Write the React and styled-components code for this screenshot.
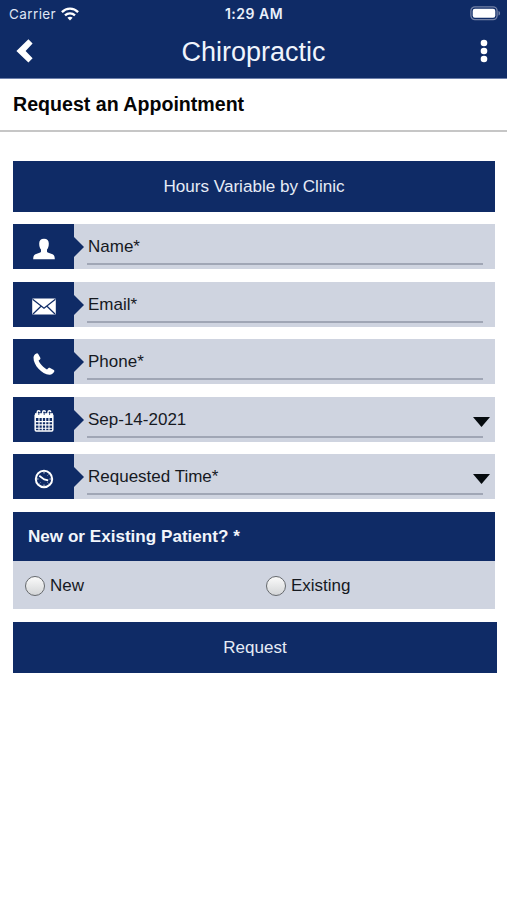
import React from 'react'
import styled, { createGlobalStyle } from 'styled-components'

const App = () => {
    return (
        <Container>
            <GlobalStyle />
            <Header>
                <StatusBar>
                    <Carrier>
                        Carrier
                        <WifiIcon />
                    </Carrier>
                    <Clock>1:29 AM</Clock>
                    <Battery>
                        <BatteryIcon />
                    </Battery>
                </StatusBar>
                <NavBar>
                    <NavButton aria-label="Back">
                        <BackIcon />
                    </NavButton>
                    <NavTitle>Chiropractic</NavTitle>
                    <NavButton aria-label="Menu" $right>
                        <MenuIcon />
                    </NavButton>
                </NavBar>
            </Header>
            <PageTitle>Request an Appointment</PageTitle>
            <Form>
                <Banner>Hours Variable by Clinic</Banner>
                {fields.map(({ label, icon, select }) => (
                    <Field key={label}>
                        <IconBox>{icon}</IconBox>
                        <Pointer viewBox="0 0 10 20">
                            <path d="M0 0L10 10L0 20Z" fill="#0f2b66" />
                        </Pointer>
                        <Input>{label}</Input>
                        {select && (
                            <Caret viewBox="0 0 17 10">
                                <path d="M0 0H17L8.5 10Z" fill="#050a0e" />
                            </Caret>
                        )}
                    </Field>
                ))}
                <Group>
                    <Question>New or Existing Patient? *</Question>
                    <Options>
                        <Option>
                            <Radio />
                            New
                        </Option>
                        <Option>
                            <Radio />
                            Existing
                        </Option>
                    </Options>
                </Group>
                <Submit>Request</Submit>
            </Form>
        </Container>
    )
}

export default App

const WifiIcon = () => (
    <svg width="18" height="14" viewBox="0 0 18 14" fill="none" stroke="#fff" strokeWidth="2.3">
        <path d="M0.9 5.1C5.4 0.5 12.6 0.5 17.1 5.1" />
        <path d="M4 8.4C6.9 5.6 11.1 5.6 14 8.4" />
        <path d="M6.4 10.8C7.9 9.4 10.1 9.4 11.6 10.8L9 13.6Z" fill="#fff" stroke="none" />
    </svg>
)

const BatteryIcon = () => (
    <svg width="31" height="15" viewBox="0 0 31 15">
        <rect x="0.9" y="0.9" width="26.2" height="12.7" rx="4" fill="none" stroke="#7482a6" strokeWidth="1.3" />
        <rect x="2.7" y="2.7" width="22.6" height="9.1" rx="2.2" fill="#fff" />
        <path d="M28.5 5C30.6 5.7 30.6 8.9 28.5 9.6Z" fill="#7482a6" />
    </svg>
)

const BackIcon = () => (
    <svg width="17" height="24" viewBox="0 0 17 24">
        <path d="M12.4 0.2L16.6 4.5L9.6 12L16.6 19.3L12.4 23.6L0.4 12Z" fill="#fff" />
    </svg>
)

const MenuIcon = () => (
    <svg width="8" height="24" viewBox="0 0 8 24" fill="#fff">
        <circle cx="4" cy="4" r="3.3" />
        <circle cx="4" cy="12" r="3.3" />
        <circle cx="4" cy="20" r="3.3" />
    </svg>
)

const UserIcon = () => (
    <svg width="22" height="22" viewBox="0 0 22 22">
        <path d="M11 0.8C14.2 0.8 15.8 2.8 15.8 5.6C15.8 8.6 15.2 10.2 14 11.6V13.4C14 14.2 14.6 14.4 15.4 14.7L19.6 16.2C21.2 16.9 21.8 18.4 21.8 21.2H0.2C0.2 18.4 0.8 16.9 2.4 16.2L6.6 14.7C7.4 14.4 8 14.2 8 13.4V11.6C6.8 10.2 6.2 8.6 6.2 5.6C6.2 2.8 7.8 0.8 11 0.8Z" fill="#fff" />
    </svg>
)

const MailIcon = () => (
    <svg width="24" height="17" viewBox="0 0 24 17">
        <rect x="0.2" y="0.5" width="23.6" height="16" rx="0.8" fill="#fff" />
        <path d="M0.6 1.3L12 10.3L23.4 1.3M1 16L9 8.2M23 16L15 8.2" fill="none" stroke="#0f2b66" strokeWidth="1.2" />
    </svg>
)

const PhoneIcon = () => (
    <svg width="22" height="22" viewBox="0 0 22 22">
        <path d="M0.5 4.4C0.6 2.5 1.8 1 3.6 0.4C4.3 0.2 4.9 0.5 5.2 1.1L7.3 4.8C7.6 5.4 7.5 6 7 6.4L5.6 7.6C6.6 10.6 10.8 15.2 14 16.4L15.5 15.1C16 14.7 16.5 14.6 17.1 14.9L20.8 17.1C21.4 17.5 21.6 18 21.3 18.6C20.3 20.8 18.6 21.8 16.4 21.7C8.8 21.2 0.3 12 0.5 4.4Z" fill="#fff" />
    </svg>
)

const CalendarIcon = () => (
    <svg width="20" height="22" viewBox="0 0 20 22">
        <path d="M1.2 4.8V19.8C1.2 20.5 1.6 20.9 2.3 20.9H17.7C18.4 20.9 18.8 20.5 18.8 19.8V4.8" fill="none" stroke="#fff" strokeWidth="1.5" />
        <path d="M1 3.2H19V8H1Z" fill="#fff" />
        <path d="M1.5 11.6H18.5M1.5 14.9H18.5M1.5 18.2H18.5M5 8V20.5M8.3 8V20.5M11.7 8V20.5M15 8V20.5" stroke="#fff" strokeWidth="1.1" />
        <path d="M3.2 5V2.2C3.2 0.3 6 0.3 6 2.2M8.6 5V2.2C8.6 0.3 11.4 0.3 11.4 2.2M14 5V2.2C14 0.3 16.8 0.3 16.8 2.2" fill="none" stroke="#fff" strokeWidth="1.4" />
        <path d="M4.8 2.4V5M10.2 2.4V5M15.6 2.4V5" stroke="#0f2b66" strokeWidth="0.8" />
    </svg>
)

const ClockIcon = () => (
    <svg width="20" height="20" viewBox="0 0 20 20" fill="none" stroke="#fff">
        <circle cx="10" cy="10" r="8.2" strokeWidth="2" />
        <path d="M5.3 6.8L10.2 10.4L14.2 11.4" strokeWidth="1.8" />
        <path d="M10 3V4.5M10 15.5V17M3 10H4.5M15.5 10H17M14.3 5.7L13.6 6.4M5.7 14.3L6.4 13.6M14.3 14.3L13.6 13.6" strokeWidth="0.8" />
    </svg>
)

const fields = [
    { label: 'Name*', icon: <UserIcon /> },
    { label: 'Email*', icon: <MailIcon /> },
    { label: 'Phone*', icon: <PhoneIcon /> },
    { label: 'Sep-14-2021', icon: <CalendarIcon />, select: true },
    { label: 'Requested Time*', icon: <ClockIcon />, select: true },
]

const GlobalStyle = createGlobalStyle`
    * {
        box-sizing: border-box;
    }
    body {
        margin: 0;
        background-color: #fff;
    }
`
const Container = styled.div`
    width: 100%;
    min-height: 900px;
    background-color: #fff;
    font-family: "Liberation Sans", Arial, sans-serif;
    font-size: 17px;
    color: #16191f;
`
const Header = styled.div`
    height: 79px;
    background-color: #0f2b66;
    border-bottom: 1px solid #6d80ab;
    color: #fff;
`
const StatusBar = styled.div`
    height: 27px;
    padding: 0 6px 0 9px;
    display: grid;
    grid-template-columns: 1fr auto 1fr;
    align-items: center;
    font-family: Inter, sans-serif;
    font-size: 13.5px;
`
const Carrier = styled.div`
    display: flex;
    align-items: center;
    gap: 5px;
    color: #dfe5f3;
    letter-spacing: 0.4px;
`
const Clock = styled.div`
    margin-right: 2px;
    font-size: 14px;
    font-weight: 600;
    letter-spacing: 0.5px;
    color: #eaf0fb;
`
const Battery = styled.div`
    display: flex;
    justify-content: flex-end;
`
const NavBar = styled.div`
    height: 49px;
    padding: 0 19px 0 16px;
    display: grid;
    grid-template-columns: 1fr auto 1fr;
    align-items: center;
`
const NavButton = styled.button`
    padding: 0 0 1px;
    border: none;
    background: none;
    display: flex;
    justify-content: ${({ $right }) => ($right ? 'flex-end' : 'flex-start')};
`
const NavTitle = styled.div`
    padding-left: 3px;
    font-size: 27px;
    line-height: 32px;
    color: #f0f4fc;
`
const PageTitle = styled.div`
    height: 53px;
    padding: 0 13px;
    border-bottom: 2px solid #c6c6c6;
    font-size: 19.6px;
    font-weight: bold;
    line-height: 51px;
    color: #050505;
`
const Form = styled.div`
    padding: 29px 12px 0 13px;
    display: flex;
    flex-direction: column;
    gap: 12.5px;
`
const Banner = styled.div`
    height: 50.8px;
    background-color: #0f2b66;
    color: #e6ebf6;
    font-size: 17.1px;
    line-height: 52px;
    text-align: center;
`
const Field = styled.div`
    position: relative;
    height: 45px;
    padding-right: 12px;
    display: flex;
    background-color: #cfd4e0;
`
const IconBox = styled.div`
    width: 61px;
    display: flex;
    align-items: center;
    justify-content: center;
    padding-top: 4px;
    background-color: #0f2b66;
`
const Pointer = styled.svg`
    width: 10px;
    height: 20px;
    margin-top: 13px;
`
const Input = styled.div`
    flex: 1;
    height: 41px;
    margin-left: 3px;
    padding-left: 1px;
    border-bottom: 2px solid #a0a6b5;
    line-height: 45.6px;
`
const Caret = styled.svg`
    position: absolute;
    right: 5px;
    top: 20px;
    width: 17px;
    height: 10px;
`
const Group = styled.div`
    height: 97.3px;
    background-color: #cfd4e0;
`
const Question = styled.div`
    height: 49px;
    padding-left: 15px;
    background-color: #0f2b66;
    color: #f2f5fb;
    font-size: 17.1px;
    font-weight: bold;
    line-height: 50px;
`
const Options = styled.div`
    height: 48px;
    padding-left: 12px;
    display: grid;
    grid-template-columns: 1fr 1fr;
    column-gap: 12px;
`
const Option = styled.label`
    display: flex;
    align-items: center;
    gap: 5px;
    padding-top: 2px;
`
const Radio = styled.span`
    width: 20px;
    height: 20px;
    border: 1.5px solid #66696d;
    border-radius: 50%;
    background: linear-gradient(#fafafa, #d3d5d7);
`
const Submit = styled.button`
    height: 51px;
    margin-right: -2px;
    padding: 0;
    border: none;
    background-color: #0f2b66;
    color: #e6ebf6;
    font-family: inherit;
    font-size: 17px;
    line-height: 52px;
`
